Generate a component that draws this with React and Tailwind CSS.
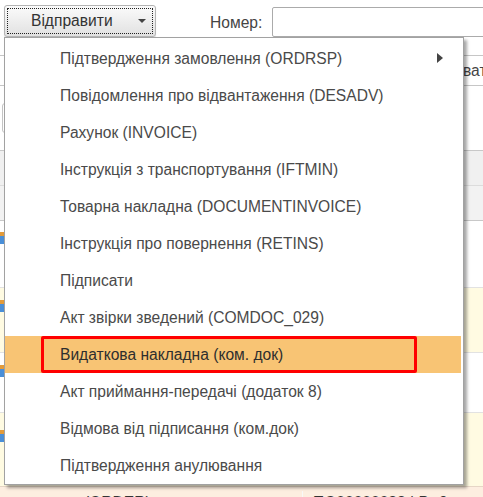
import React from 'react'

const items = [
  'Підтвердження замовлення (ORDRSP)',
  'Повідомлення про відвантаження (DESADV)',
  'Рахунок (INVOICE)',
  'Інструкція з транспортування (IFTMIN)',
  'Товарна накладна (DOCUMENTINVOICE)',
  'Інструкція про повернення (RETINS)',
  'Підписати',
  'Акт звірки зведений (COMDOC_029)',
  'Видаткова накладна (ком. док)',
  'Акт приймання-передачі (додаток 8)',
  'Відмова від підписання (ком.док)',
  'Підтвердження анулювання',
]

function RowIcon() {
  return (
    <div className="flex h-[12px] w-[4px] flex-col">
      <div className="h-[4px] w-full bg-[#e39b3a]" />
      <div className="h-[8px] w-full bg-[#4a8fd8]" />
    </div>
  )
}

function Background() {
  return (
    <div className="flex h-full w-full flex-col">
      {/* toolbar */}
      <div className="flex h-[42px] shrink-0 items-start">
        <div className="ml-[4px] mt-[5px] h-[32px] w-[152px] shrink-0 rounded-[3px] border border-[#b4b4b4] bg-gradient-to-b from-[#fbfbfb] to-[#e1e1e1] p-[2px] shadow-[0_1px_1px_rgba(0,0,0,0.15)]">
          <div className="flex h-full items-center border border-dotted border-[#222] pl-[23px] pr-[6px]">
            <span className="text-[15.6px] text-[#333]">Відправити</span>
            <span className="ml-auto h-0 w-0 border-x-[4px] border-t-[4px] border-x-transparent border-t-[#444]" />
          </div>
        </div>
        <span className="ml-[54px] mt-[11px] shrink-0 text-[15.6px] text-[#444]">Номер:</span>
        <div className="ml-[10px] mt-[7px] h-[30px] w-[240px] shrink-0 rounded-[2px] border border-[#ababab] bg-white" />
      </div>
      <div className="h-[13px] shrink-0" />
      {/* second bar */}
      <div className="flex h-[31px] shrink-0 items-center overflow-hidden border-y border-[#c6c6c6]">
        <span className="ml-[463px] shrink-0 whitespace-nowrap text-[15.6px] text-[#444]">ват</span>
      </div>
      <div className="flex h-[64px] shrink-0 items-center bg-white">
        <div className="ml-[2px] h-[30px] w-[100px] rounded-[3px] border border-[#c4c4c4]" />
      </div>
      {/* table header */}
      <div className="h-[35px] shrink-0 border-t border-[#c8c8c8] bg-[#f0f0f0]" />
      <div className="h-[35px] shrink-0 border-t border-[#dcdcdc] bg-[#f2f2f2]" />
      {/* rows */}
      <div className="flex h-[67px] shrink-0 items-start border-t border-[#c8c8c8] bg-white pt-[11px]">
        <RowIcon />
      </div>
      <div className="flex h-[65px] shrink-0 items-start border-t border-[#e2e2e2] bg-[#fffbe2] pt-[12px]">
        <RowIcon />
      </div>
      <div className="flex h-[60px] shrink-0 items-start border-t border-[#e2e2e2] bg-white pt-[12px]">
        <RowIcon />
      </div>
      <div className="flex h-[74px] shrink-0 items-start border-t border-[#e2e2e2] bg-[#fffbe2] pt-[17px]">
        <RowIcon />
      </div>
      <div className="flex h-[30px] shrink-0 items-start border-t border-[#e6d6c6] bg-[#fdeee0] pt-[4px] text-[15.6px] text-[#333]">
        <span className="ml-[84px] w-[218px] shrink-0">(ORDER)</span>
        <span className="shrink-0 whitespace-nowrap border-l border-[#f8f8f8] pl-[10px]">ПО00000083 | Р.. 9</span>
      </div>
    </div>
  )
}

function Menu() {
  return (
    <div className="absolute left-[4px] top-[37px] w-[460px] border border-[#a2a2a2] bg-white pr-[2px] pt-[2px] shadow-[3px_3px_3px_rgba(0,0,0,0.35)]">
      {items.map((t, i) => (
        <div
          key={i}
          className={
            i === 8
              ? 'relative flex h-[37px] items-center bg-[#f8c474] pl-[55px] text-[15.6px] text-[#2e2e2e]'
              : 'relative flex h-[37px] items-center pl-[55px] text-[15.6px] text-[#4a4a4a]'
          }
        >
          <span className="whitespace-nowrap">{t}</span>
          {i === 0 && (
            <span className="absolute right-[18px] top-[13px] h-0 w-0 border-y-[5px] border-l-[6px] border-y-transparent border-l-[#444]" />
          )}
          {i === 8 && (
            <div className="absolute left-[36px] top-0 h-[37px] w-[376px] rounded-[2px] border-[3px] border-[#ff0000]" />
          )}
        </div>
      ))}
    </div>
  )
}

export default function App() {
  return (
    <div className="relative h-[497px] w-[483px] overflow-hidden bg-white font-['Liberation_Sans',Arial,sans-serif]">
      <Background />
      <Menu />
    </div>
  )
}
